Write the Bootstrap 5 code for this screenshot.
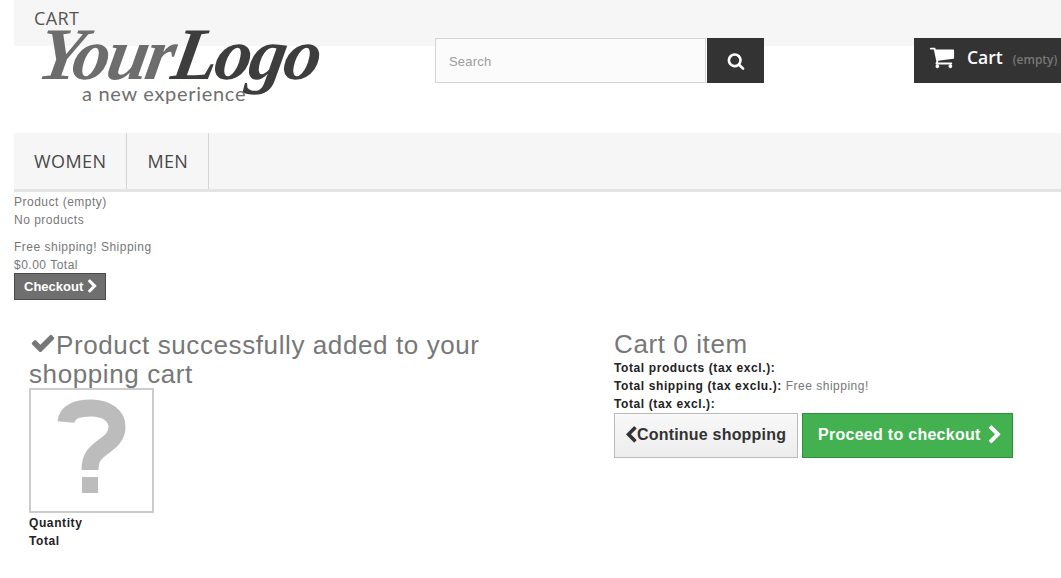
<!DOCTYPE html>
<html lang="en">
<head>
    <meta charset="UTF-8">
    <meta name="viewport" content="width=device-width, initial-scale=1.0">
    <title>Cart</title>
    <link href="https://cdn.jsdelivr.net/npm/bootstrap@5.3.0/dist/css/bootstrap.min.css" rel="stylesheet">
    <style>
        html, body { overflow: hidden; }
        body {
            background-color: #fff;
            color: #777;
            font-family: "Liberation Sans", Arial, sans-serif;
            font-size: 12px;
            line-height: 18px;
            letter-spacing: .5px;
            padding-left: 14px;
        }
        .ico { fill: currentColor; display: inline-block; flex-shrink: 0; }
        .top-strip {
            height: 46px;
            background-color: #f6f6f6;
            padding: 9px 0 0 20px;
            font-family: "Open Sans", sans-serif;
            font-size: 18px;
            letter-spacing: .4px;
            color: #555;
        }
        .head-row { height: 95px; margin-top: -8px; position: relative; }
        .site-logo {
            position: absolute;
            left: 21px;
            top: -16px;
            width: 294px;
            height: 84px;
            letter-spacing: 0;
        }
        .logo-script {
            position: absolute;
            left: 0;
            top: 6px;
            white-space: nowrap;
            font-family: "Liberation Serif", serif;
            font-weight: bold;
            font-style: italic;
            font-size: 74px;
            line-height: 52px;
            letter-spacing: -2.5px;
            color: #6d6d6d;
            transform: skewX(-10deg);
            transform-origin: left bottom;
        }
        .logo-script span { color: #3d3d3d; }
        .logo-tag {
            position: absolute;
            left: 47px;
            top: 61px;
            font-family: Lato, sans-serif;
            font-size: 20px;
            line-height: 20px;
            letter-spacing: .7px;
            color: #6f6f6f;
            white-space: nowrap;
        }
        .search-box { margin-left: 421px; width: 329px; height: 45px; }
        .search-field {
            width: 271px;
            height: 45px;
            background: #fbfbfb;
            border: 1px solid #d6d4d4;
            padding: 2px 13px 0;
            font-family: "Liberation Sans", sans-serif;
            font-size: 13px;
            letter-spacing: .2px;
            color: #9c9b9b;
        }
        .search-go {
            width: 57px;
            height: 45px;
            margin-left: 1px;
            background: #333;
            color: #fff;
        }
        .cart-tab {
            margin-left: 150px;
            width: 147px;
            height: 45px;
            background: #333;
            color: #fff;
            padding: 0 0 8px 15px;
            white-space: nowrap;
            font-family: "Open Sans", sans-serif;
            letter-spacing: 0;
        }
        .cart-word { font-size: 17.5px; font-weight: 600; margin-left: 12px; }
        .cart-none { font-size: 12px; font-weight: 600; color: #777; margin-left: 10px; padding-top: 7px; }
        .menu-bar {
            height: 59px;
            background: #f6f6f6;
            border-bottom: 3px solid #e4e4e4;
            font-family: "Open Sans", sans-serif;
            font-size: 18px;
            letter-spacing: .4px;
            color: #484848;
        }
        .menu-item {
            height: 56px;
            padding: 0 20px;
            border-right: 1px solid #d6d4d4;
            line-height: 56px;
        }
        .mini-list { padding-top: 1px; }
        .mini-gap { margin-top: 9px; }
        .checkout-mini {
            width: 92px;
            height: 27px;
            margin-top: -1px;
            background: #6f6f6f;
            border: 1px solid #4a4a4a;
            color: #fff;
            font-weight: bold;
            font-size: 13px;
            letter-spacing: 0;
            padding-left: 9px;
            gap: 2px;
        }
        .added-wrap { padding: 30px 0 0 15px; }
        .added-left { width: 585px; flex-shrink: 0; }
        .added-title {
            font-family: "Liberation Sans", sans-serif;
            font-size: 26px;
            line-height: 29px;
            font-weight: normal;
            letter-spacing: .6px;
            color: #777;
            margin: 0;
        }
        .added-left .added-title { width: 480px; }
        .added-title .ico { vertical-align: -2px; margin-left: 1px; }
        .no-pic {
            display: block;
            width: 125px;
            height: 125px;
            margin-top: -1px;
            border: 2px solid #ccc;
        }
        .dark-label { color: #222; font-weight: bold; letter-spacing: .6px; }
        .pic-labels { margin-top: 1px; }
        .btn-row { gap: 4px; }
        .back-btn, .go-btn {
            height: 45px;
            font-size: 16px;
            font-weight: bold;
            letter-spacing: .28px;
            white-space: nowrap;
            padding-bottom: 1px;
        }
        .back-btn {
            width: 184px;
            background: linear-gradient(#f8f8f8, #ededed);
            border: 1px solid #bbb;
            color: #333;
            padding-left: 7px;
            letter-spacing: .2px;
        }
        .back-btn .ico { margin-right: -3px; }
        .go-btn {
            width: 211px;
            background: #43b14f;
            border: 1px solid #2f8e3a;
            color: #fff;
            padding-left: 15px;
            padding-right: 7px;
            justify-content: space-between;
        }
    </style>
</head>
<body>
    <svg width="0" height="0" class="position-absolute">
        <symbol id="i-check" viewBox="0 0 1792 1792"><path d="M1671 566q0 40-28 68l-724 724-136 136q-28 28-68 28t-68-28l-136-136-362-362q-28-28-28-68t28-68l136-136q28-28 68-28t68 28l294 295 656-657q28-28 68-28t68 28l136 136q28 28 28 68z"/></symbol>
        <symbol id="i-right" viewBox="0 0 1792 1792"><path d="M1363 877l-742 742q-19 19-45 19t-45-19l-166-166q-19-19-19-45t19-45l531-531-531-531q-19-19-19-45t19-45l166-166q19-19 45-19t45 19l742 742q19 19 19 45t-19 45z"/></symbol>
        <symbol id="i-left" viewBox="0 0 1792 1792"><path d="M1427 301l-531 531 531 531q19 19 19 45t-19 45l-166 166q-19 19-45 19t-45-19l-742-742q-19-19-19-45t19-45l742-742q19-19 45-19t45 19l166 166q19 19 19 45t-19 45z"/></symbol>
        <symbol id="i-search" viewBox="0 0 1792 1792"><path d="M1216 832q0-185-131.500-316.500t-316.500-131.500-316.500 131.500-131.500 316.500 131.500 316.500 316.500 131.500 316.500-131.500 131.500-316.500zm512 832q0 52-38 90t-90 38q-54 0-90-38l-343-342q-179 124-399 124-143 0-273.500-55.500t-225-150-150-225-55.500-273.500 55.500-273.500 150-225 225-150 273.500-55.500 273.500 55.500 225 150 150 225 55.500 273.500q0 220-124 399l343 343q37 37 37 90z"/></symbol>
        <symbol id="i-cart" viewBox="0 0 1792 1792"><path d="M704 1536q0 52-38 90t-90 38-90-38-38-90 38-90 90-38 90 38 38 90zm896 0q0 52-38 90t-90 38-90-38-38-90 38-90 90-38 90 38 38 90zm128-1088v512q0 24-16.500 42.500t-40.500 21.500l-1044 122q13 60 13 70 0 16-24 64h920q26 0 45 19t19 45-19 45-45 19h-1024q-26 0-45-19t-19-45q0-11 8-31.500t16-36 21.500-40 15.500-29.500l-177-823h-204q-26 0-45-19t-19-45 19-45 45-19h256q16 0 28.500 6.500t19.500 15.500 13 24.500 8 26 5.500 29.500 4.500 26h1201q26 0 45 19t19 45z"/></symbol>
    </svg>

    <div class="top-strip">CART</div>

    <div class="head-row d-flex align-items-start">
        <div class="site-logo">
            <div class="logo-script">Your<span>Logo</span></div>
            <div class="logo-tag">a new experience</div>
        </div>
        <div class="search-box d-flex">
            <div class="search-field d-flex align-items-center">Search</div>
            <div class="search-go d-flex align-items-center justify-content-center">
                <svg class="ico" width="18" height="18"><use href="#i-search"/></svg>
            </div>
        </div>
        <div class="cart-tab d-flex align-items-center">
            <svg class="ico" width="26" height="26"><use href="#i-cart"/></svg>
            <span class="cart-word">Cart</span>
            <span class="cart-none">(empty)</span>
        </div>
    </div>

    <nav class="menu-bar d-flex">
        <div class="menu-item">WOMEN</div>
        <div class="menu-item">MEN</div>
    </nav>

    <div class="mini-list">
        <div>Product (empty)</div>
        <div>No products</div>
        <div class="mini-gap">Free shipping! Shipping</div>
        <div>$0.00 Total</div>
        <div class="checkout-mini d-flex align-items-center">Checkout
            <svg class="ico" width="15" height="15"><use href="#i-right"/></svg>
        </div>
    </div>

    <div class="added-wrap d-flex">
        <div class="added-left">
            <h2 class="added-title"><svg class="ico" width="26" height="26"><use href="#i-check"/></svg>Product successfully added to your shopping cart</h2>
            <svg class="no-pic" viewBox="0 0 121 121">
                <path d="M35 32C36 22 46 18 60 18C76 18 86 26 86 37C86 47 79 52 72 57C64 63 59 67 59 80" fill="none" stroke="#bcbcbc" stroke-width="17"/>
                <rect x="51" y="87" width="16" height="16" fill="#bcbcbc"/>
            </svg>
            <div class="pic-labels dark-label">
                <div>Quantity</div>
                <div>Total</div>
            </div>
        </div>
        <div>
            <h2 class="added-title">Cart 0 item</h2>
            <div><span class="dark-label">Total products (tax excl.):</span></div>
            <div><span class="dark-label">Total shipping (tax exclu.):</span> Free shipping!</div>
            <div><span class="dark-label">Total (tax excl.):</span></div>
            <div class="btn-row d-flex">
                <div class="back-btn d-flex align-items-center"><svg class="ico" width="18" height="18"><use href="#i-left"/></svg>Continue shopping</div>
                <div class="go-btn d-flex align-items-center">Proceed to checkout <svg class="ico" width="20" height="20"><use href="#i-right"/></svg></div>
            </div>
        </div>
    </div>

    <script src="https://cdn.jsdelivr.net/npm/bootstrap@5.3.0/dist/js/bootstrap.bundle.min.js"></script>
</body>
</html>
